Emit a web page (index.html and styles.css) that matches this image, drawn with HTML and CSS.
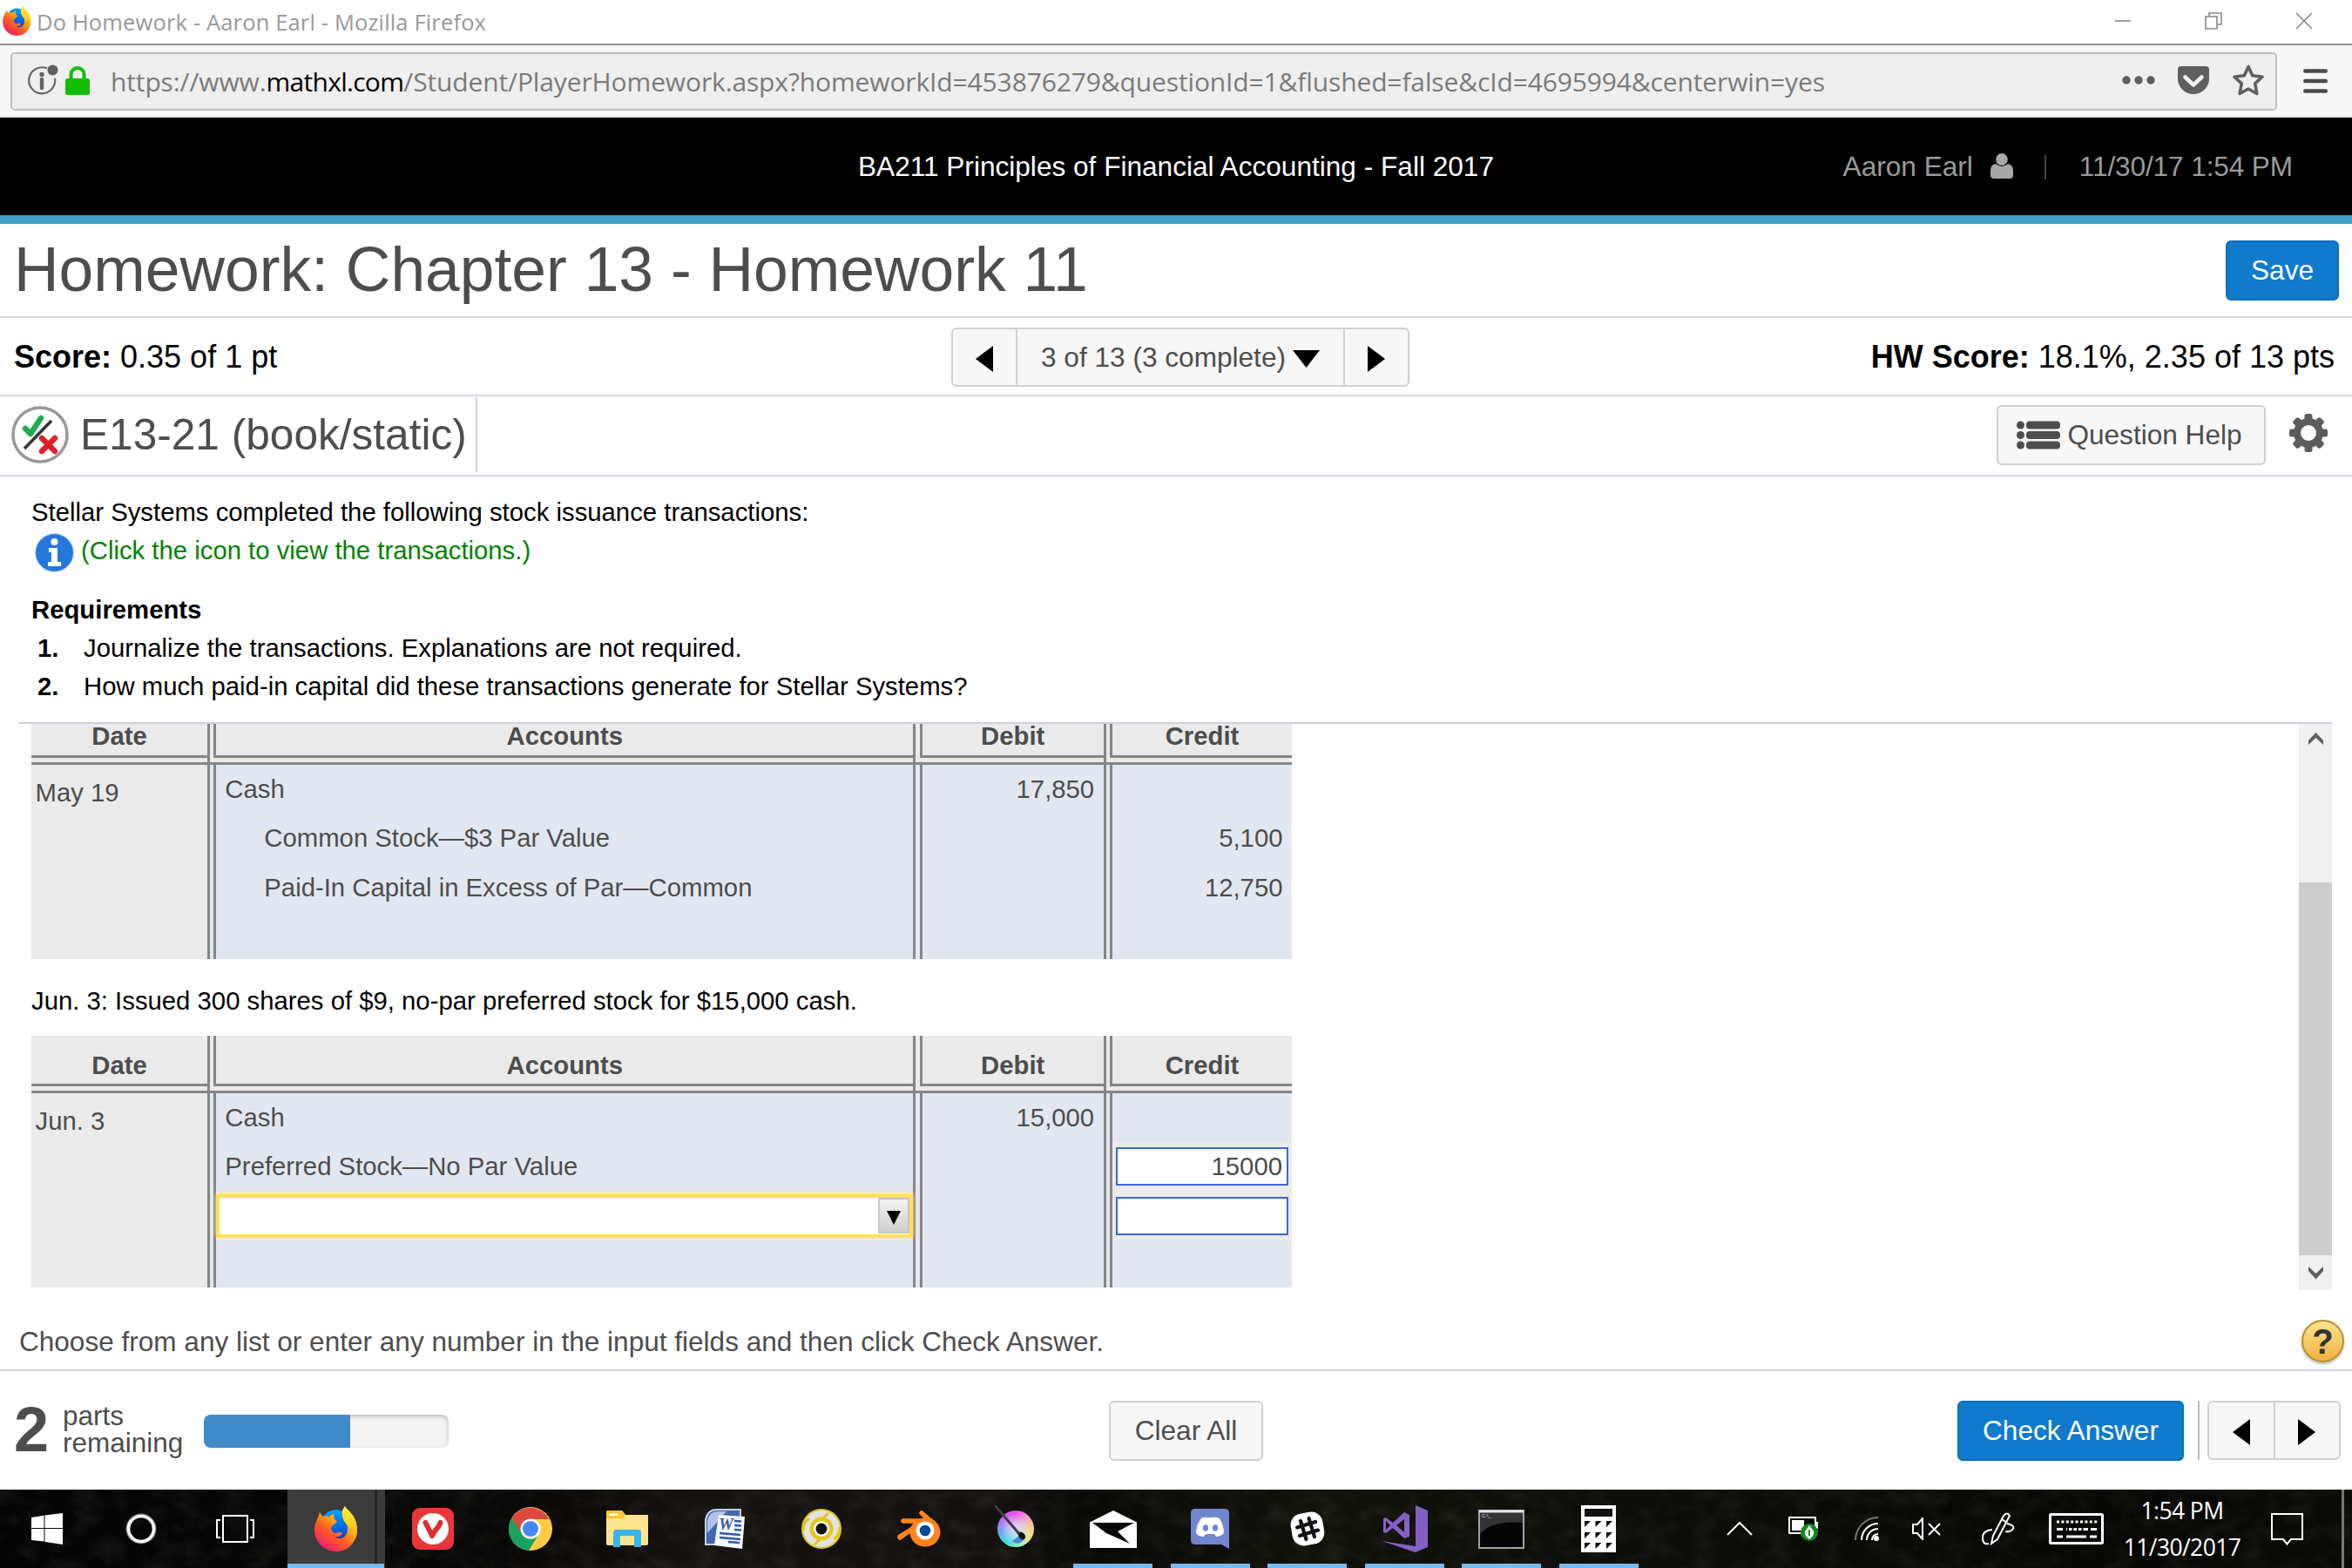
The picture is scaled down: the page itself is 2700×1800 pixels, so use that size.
FILE: index.html
```html
<!DOCTYPE html>
<html lang="en">
<head>
<meta charset="utf-8">
<title>Do Homework - Aaron Earl</title>
<link rel="stylesheet" href="styles.css">
</head>
<body>
<svg width="0" height="0" class="defs">
  <defs>
    <linearGradient id="ffBody" x1="0.9" y1="0" x2="0.2" y2="1"><stop offset="0" stop-color="#fff44f"/><stop offset=".35" stop-color="#ffb81a"/><stop offset=".65" stop-color="#ff5a24"/><stop offset="1" stop-color="#f0147a"/></linearGradient>
    <linearGradient id="ffTail" x1="0" y1="0" x2="0" y2="1"><stop offset="0" stop-color="#fff23c"/><stop offset=".5" stop-color="#ffd21e"/><stop offset="1" stop-color="#ff9a10"/></linearGradient>
    <linearGradient id="ffGlobe" x1="0" y1="0" x2="0" y2="1"><stop offset="0" stop-color="#00a2ff"/><stop offset=".6" stop-color="#0560e0"/><stop offset="1" stop-color="#3a1a80"/></linearGradient>
    <symbol id="firefox" viewBox="0 0 50 52">
      <ellipse cx="25" cy="24" rx="19" ry="20" fill="url(#ffGlobe)"/>
      <path d="M6 6c1 3 2 4 4 6 3-1 5-1 7 0 2-2 4-3 6-3-1 2-1 4 0 6l3 3-6 5c-2 3 0 7 4 8 3 0 5-2 8 0-2 4-5 5-9 4 6 5 14 1 15-7 1-8-5-12-6-19C31 5 34 2 35 0c1 4 13 9 14 26 0 15-10 26-24 26S0 41 0 27C0 18 5 14 6 6z" fill="url(#ffBody)"/>
      <path d="M35 0c2 5 14 10 14 27 0 5-1 8-3 12-1-9-4-13-9-18C31 15 30 6 35 0z" fill="url(#ffTail)"/>
    </symbol>
    <symbol id="left" viewBox="0 0 20 30"><path d="M20 0v30L0 15z"/></symbol>
    <symbol id="right" viewBox="0 0 20 30"><path d="M0 0v30l20-15z"/></symbol>
  </defs>
</svg>

<header class="titlebar">
  <svg class="app-icon" width="33" height="34"><use href="#firefox"/></svg>
  <span class="window-title">Do Homework - Aaron Earl - Mozilla Firefox</span>
  <div class="window-controls">
    <svg width="20" height="20" viewBox="0 0 20 20"><path d="M1 10h18" stroke="#888" stroke-width="1.6"/></svg>
    <svg width="20" height="20" viewBox="0 0 20 20" fill="none" stroke="#888" stroke-width="1.6"><path d="M1 5h13v14H1zM5 5V1h14v13h-5"/></svg>
    <svg width="20" height="20" viewBox="0 0 20 20" stroke="#888" stroke-width="1.6"><path d="M1 1l18 18M19 1L1 19"/></svg>
  </div>
</header>

<nav class="toolbar">
  <div class="urlbar">
    <svg class="i-id" width="36" height="36" viewBox="0 0 36 36"><path d="M22 4.500A15 15 0 1 0 31 16" fill="none" stroke="#666" stroke-width="2.200"/><circle cx="28.500" cy="6.500" r="6" fill="#5f5f5f"/><circle cx="16" cy="11.500" r="2.700" fill="#666"/><path d="M16 17v10" stroke="#666" stroke-width="4.400" stroke-linecap="round"/></svg>
    <svg class="i-lock" width="28" height="33" viewBox="0 0 28 33"><path d="M6.500 16V9.500a7.500 7.500 0 0 1 15 0V16" fill="none" stroke="#12bc00" stroke-width="4"/><rect y="14" width="28" height="19" rx="2.500" fill="#12bc00"/></svg>
    <span class="url">https://www.<b>mathxl.com</b>/Student/PlayerHomework.aspx?homeworkId=453876279&amp;questionId=1&amp;flushed=false&amp;cId=4695994&amp;centerwin=yes</span>
    <div class="page-actions">
      <svg width="38" height="10" viewBox="0 0 38 10" fill="#5f5f5f"><circle cx="5" cy="5" r="4.700"/><circle cx="19" cy="5" r="4.700"/><circle cx="33" cy="5" r="4.700"/></svg>
      <svg width="36" height="33" viewBox="0 0 36 33"><path d="M4 0h28q4 0 4 4v10a18 18 0 0 1-36 0V4q0-4 4-4z" fill="#5f5f5f"/><path d="M8.500 12.500l9.500 9 9.500-9" fill="none" stroke="#f0f0f0" stroke-width="4.500" stroke-linecap="round" stroke-linejoin="round"/></svg>
      <svg width="38" height="38" viewBox="0 0 38 38"><path d="M19 3.500l4.700 10.300 11.300 1.400-8.300 7.700 2.200 11.600L19 29l-9.900 5.500 2.200-11.600L3 15.200l11.300-1.400z" fill="none" stroke="#5f5f5f" stroke-width="3.600" stroke-linejoin="round"/></svg>
    </div>
  </div>
  <svg class="menu" width="28" height="28" viewBox="0 0 28 28" stroke="#4a4a4a" stroke-width="4.400" stroke-linecap="round"><path d="M2.200 2.500h23.600M2.200 14h23.600M2.200 25.500h23.600"/></svg>
</nav>

<div class="course-bar">
  <span class="course">BA211 Principles of Financial Accounting - Fall 2017</span>
  <div class="user">
    <span class="user-name">Aaron Earl</span>
    <svg width="26" height="29" viewBox="0 0 26 29" fill="#a8a8a8"><path d="M6 12Q0 13 0 20v5q0 4 4 4h18q4 0 4-4v-5q0-7-6-8-7 6-14 0z"/><ellipse cx="13" cy="7" rx="6.800" ry="7"/></svg>
    <i class="bar"></i>
    <span class="stamp">11/30/17 1:54 PM</span>
  </div>
</div>

<div class="row heading">
  <h1>Homework: Chapter 13 - Homework 11</h1>
  <button class="btn primary save">Save</button>
</div>

<div class="row score">
  <span><b>Score:</b> 0.35 of 1 pt</span>
  <div class="pager">
    <span class="cell prev"><svg width="20" height="30"><use href="#left"/></svg></span>
    <span class="cell count">3 of 13 (3 complete)<svg width="31" height="20" viewBox="0 0 31 20"><path d="M0 0h31L15.500 20z"/></svg></span>
    <span class="cell next"><svg width="20" height="30"><use href="#right"/></svg></span>
  </div>
  <span><b>HW Score:</b> 18.1%, 2.35 of 13 pts</span>
</div>

<div class="row exercise">
  <div class="exercise-name">
    <svg width="66" height="66" viewBox="0 0 66 66" fill="none"><circle cx="33" cy="33" r="31" stroke="#999" stroke-width="3.500"/><path d="M46 17L15 49" stroke="#333" stroke-width="3.500"/><path d="M16 26l6 6L34 14" stroke="#1fad50" stroke-width="6.500" stroke-linecap="round" stroke-linejoin="round"/><path d="M35 37l15 15M50 37L35 52" stroke="#db2128" stroke-width="6.500" stroke-linecap="round"/></svg>
    <span>E13-21 (book/static)</span>
  </div>
  <div class="exercise-tools">
    <button class="btn help"><svg width="50" height="33" viewBox="0 0 50 33" fill="#4d4d4d"><circle cx="4.500" cy="5" r="4.500"/><circle cx="4.500" cy="16.500" r="4.500"/><circle cx="4.500" cy="28" r="4.500"/><rect x="11" y="0.500" width="39" height="9" rx="4"/><rect x="11" y="12" width="39" height="9" rx="4"/><rect x="11" y="23.500" width="39" height="9" rx="4"/></svg>Question Help</button>
    <svg class="gear" width="44" height="44" viewBox="-22 -22 44 44"><g fill="#5c5c5c"><rect x="-4.500" y="-22" width="9" height="44" rx="2.500"/><rect x="-4.500" y="-22" width="9" height="44" rx="2.500" transform="rotate(45)"/><rect x="-4.500" y="-22" width="9" height="44" rx="2.500" transform="rotate(90)"/><rect x="-4.500" y="-22" width="9" height="44" rx="2.500" transform="rotate(135)"/><circle r="17"/></g><circle r="9" fill="#fff"/></svg>
  </div>
</div>

<section class="prompt">
  <p>Stellar Systems completed the following stock issuance transactions:</p>
  <p class="link"><svg width="45" height="45" viewBox="0 0 45 45"><circle cx="22.500" cy="22.500" r="21.500" fill="#2478db" stroke="#5b9be6"/><circle cx="22.500" cy="10" r="4" fill="#fff"/><path d="M16 17h10v16h4v5H15v-5h4V22h-3z" fill="#fff"/></svg>(Click the icon to view the transactions.)</p>
  <p class="req"><b>Requirements</b></p>
  <p class="item"><b>1.</b>Journalize the transactions. Explanations are not required.</p>
  <p class="item"><b>2.</b>How much paid-in capital did these transactions generate for Stellar Systems?</p>
</section>

<main class="scroller">
  <div class="entries">
    <div class="ledger clipped">
      <div class="cols head"><b>Date</b><b>Accounts</b><b>Debit</b><b>Credit</b></div>
      <div class="cols strip"><i></i><i></i><i></i><i></i></div>
      <div class="cols body">
        <div class="date">May 19</div>
        <div class="acct"><p>Cash</p><p class="indent">Common Stock—$3 Par Value</p><p class="indent">Paid-In Capital in Excess of Par—Common</p></div>
        <div class="num"><p>17,850</p></div>
        <div class="num"><p>&nbsp;</p><p>5,100</p><p>12,750</p></div>
      </div>
    </div>
    <p class="event">Jun. 3: Issued 300 shares of $9, no-par preferred stock for $15,000 cash.</p>
    <div class="ledger">
      <div class="cols head"><b>Date</b><b>Accounts</b><b>Debit</b><b>Credit</b></div>
      <div class="cols strip"><i></i><i></i><i></i><i></i></div>
      <div class="cols body">
        <div class="date">Jun. 3</div>
        <div class="acct"><p>Cash</p><p>Preferred Stock—No Par Value</p><div class="pick-row"><div class="pick"><span class="pick-btn"><svg width="16" height="16" viewBox="0 0 16 16"><path d="M0 0h16L8 16z"/></svg></span></div></div></div>
        <div class="num"><p>15,000</p></div>
        <div class="num"><p>&nbsp;</p><div class="field"><span>15000</span></div><div class="field"><span></span></div></div>
      </div>
    </div>
  </div>
  <div class="scrollbar">
    <svg width="17" height="15" viewBox="0 0 17 15"><path d="M0 10l8.500-9 8.500 9v5L8.500 7 0 15z" fill="#5f5f5f"/></svg>
    <i class="thumb"></i>
    <svg width="17" height="15" viewBox="0 0 17 15"><path d="M0 0l8.500 8L17 0v5l-8.500 9.500L0 5z" fill="#5f5f5f"/></svg>
  </div>
</main>

<div class="instruction">
  <p>Choose from any list or enter any number in the input fields and then click Check Answer.</p>
  <span class="hint">?</span>
</div>

<footer class="actions">
  <div class="parts"><b>2</b><span>parts<br>remaining</span><div class="progress"><i></i></div></div>
  <button class="btn clear">Clear All</button>
  <div class="submit">
    <button class="btn primary check">Check Answer</button>
    <i class="rule"></i>
    <div class="pager small"><span class="cell"><svg width="20" height="30"><use href="#left"/></svg></span><span class="cell"><svg width="20" height="30"><use href="#right"/></svg></span></div>
  </div>
</footer>

<div class="taskbar">
  <svg class="texture" width="2700" height="90"><filter id="rock"><feTurbulence type="fractalNoise" baseFrequency="0.035 0.05" numOctaves="5" seed="4"/><feColorMatrix values="0 0 0 0 .36  0 0 0 0 .33  0 0 0 0 .26  1.6 0 0 0 -.62"/></filter><rect width="2700" height="90" filter="url(#rock)"/></svg>
  <div class="apps">
    <span class="sys"><svg width="36" height="36" viewBox="0 0 36 36" fill="#fff"><path d="M0 5l14.500-2.200V17H0zM15.500 2.600L36 0v17H15.500zM0 18h14.500v14.500L0 31zM15.500 18H36v18l-20.500-3z"/></svg></span>
    <span class="sys"><svg width="36" height="36" viewBox="0 0 36 36" fill="none"><circle cx="18" cy="18" r="16" stroke="#777" stroke-width="3"/><circle cx="18" cy="18" r="14.500" stroke="#fff" stroke-width="3.600"/></svg></span>
    <span class="sys"><svg width="44" height="34" viewBox="0 0 44 34" fill="none" stroke="#fff" stroke-width="2"><path d="M8 2h28v30H8zM5 7H1v20h4M39 7h4v20h-4"/></svg></span>
    <span class="app active"><svg width="50" height="52"><use href="#firefox"/></svg></span>
    <span class="app"><svg width="48" height="48" viewBox="0 0 48 48"><rect width="48" height="48" rx="9" fill="#ea3639"/><circle cx="24" cy="24" r="18" fill="#fff"/><path d="M15.500 17L23 32l4-6.500q4.500-5 5.500-8.500" fill="none" stroke="#dc2f33" stroke-width="6" stroke-linecap="round" stroke-linejoin="round"/></svg></span>
    <span class="app"><svg width="50" height="50" viewBox="0 0 50 50"><circle cx="25" cy="25" r="25" fill="#ffcd43"/><path d="M3.400 12.500A25 25 0 0 0 23 50l11-18-18-2z" fill="#1aa260"/><path d="M3.400 12.500A25 25 0 0 1 46.600 14H25l-11 15z" fill="#db4a3d"/><circle cx="25" cy="25" r="11.500" fill="#fff"/><circle cx="25" cy="25" r="9" fill="#4587f4"/></svg></span>
    <span class="app"><svg width="48" height="42" viewBox="0 0 48 42"><path d="M0 3q0-3 2-3h16l4 5h26v33q0 2-2 2H2q-2 0-2-2z" fill="#ffe48f"/><path d="M0 2q0-2 2-2h16l4 5-3 4H0z" fill="#fcc72e"/><path d="M3 3.500h10v2.500H3z" fill="#fff"/><path d="M8 42V26q0-4 4-4h24q4 0 4 4v16h-8V29H16v13z" fill="#38b5ea"/></svg></span>
    <span class="app"><svg width="46" height="46" viewBox="0 0 46 46"><path d="M1 41V13Q3 1 14 1h27v40z" fill="#4169ad" stroke="#c3d1e8" stroke-width="2"/><path d="M3 14Q5 3 15 3h10L3 28z" fill="#b1c4e5"/><path d="M16 7l30 2-3 37-32-4z" fill="#f6f9ff"/><path d="M34 14l8 .500M34 19l8 .500M34 24l8 .500M17 28l24 2M17 33l24 2M27 38l13 1" stroke="#315ba8" stroke-width="2.500"/><text x="16" y="24" class="word-letter">W</text></svg></span>
    <span class="app"><svg width="46" height="46" viewBox="0 0 46 46"><circle cx="23" cy="23" r="22" fill="#e3e3e1" stroke="#dfc623" stroke-width="2"/><path d="M31 5L10 25M36 21L15 41M2 25q0-9 7-14M44 21q0 9-7 14" stroke="#e4c51b" stroke-width="3" fill="none"/><circle cx="23" cy="23" r="11" fill="none" stroke="#e8c41c" stroke-width="5"/><circle cx="23" cy="23" r="9" fill="#fff"/><circle cx="23" cy="23" r="6.500" fill="#111"/></svg></span>
    <span class="app"><svg width="50" height="42" viewBox="0 0 50 42"><path d="M28 3L43 16M7 12h25L3 30M23 17L3 31" stroke="#ff831c" stroke-width="5.500" stroke-linecap="round" fill="none"/><ellipse cx="32" cy="25" rx="17.500" ry="16.500" fill="#ff831c"/><circle cx="32" cy="23" r="10.500" fill="#fff"/><circle cx="32" cy="23" r="6.300" fill="#08479a"/></svg></span>
    <span class="app"><span class="krita"><svg width="46" height="50" viewBox="0 0 46 50"><path d="M20 41q6 6 13-1 3-5-1-8" fill="#4c86d8"/><path d="M0 0l29 34" stroke="#453b4a" stroke-width="3"/><ellipse cx="31" cy="35" rx="3.500" ry="5" transform="rotate(-40 31 35)" fill="#16171c"/></svg></span></span>
    <span class="app open"><svg width="54" height="43" viewBox="0 0 54 43"><path d="M0 13.500L27 0l27 13.500V43H0z" fill="#fff"/><path d="M3 14h48L32 24l14 14-27-12z" fill="#070707"/></svg></span>
    <span class="app open"><svg width="44" height="46" viewBox="0 0 44 46"><path d="M5 0h34q5 0 5 5v41l-9-5H5q-5 0-5-5V5q0-5 5-5z" fill="#7285cf"/><path d="M12 11q4-2 7-1h6q4-1 8 1 5 8 5 17-4 4-9 4l-2-3H17l-2 3q-6 0-9-4 0-9 6-17z" fill="#fff"/><ellipse cx="17" cy="22" rx="3.200" ry="3.800" fill="#7285cf"/><ellipse cx="28" cy="22" rx="3.200" ry="3.800" fill="#7285cf"/></svg></span>
    <span class="app open"><svg width="42" height="42" viewBox="0 0 42 42"><rect x="2.500" y="2.500" width="37" height="37" rx="13" fill="#fff" transform="rotate(-10 21 21)"/><g transform="rotate(-17 21 21)" stroke="#111" stroke-width="4.200" stroke-linecap="round"><path d="M16 10v22M26 10v22M10 16h22M10 26h22"/></g></svg></span>
    <span class="app open"><svg width="53" height="54" viewBox="0 0 53 54"><path fill-rule="evenodd" d="M39 0l14 6v42l-14 6L0 41l39 6zM2 15l3-1 8 6L26 8l6 3v25l-6 2-13-12-8 6-3-1zM5 18v10l5-5zM26 16l-9 7 9 8z" fill="#865fc5"/></svg></span>
    <span class="app open"><svg width="53" height="45" viewBox="0 0 53 45"><rect x="1" y="1" width="51" height="43" fill="#050505" stroke="#9ea3a8" stroke-width="2"/><path d="M2 3h49v12Q16 12 2 28z" fill="#333"/><path d="M1 2h51" stroke="#e4e6e9" stroke-width="3"/><text x="4" y="9" class="cmd-letter">C:\_</text></svg></span>
    <span class="app open"><svg width="40" height="54" viewBox="0 0 40 54"><rect width="40" height="54" fill="#fff"/><rect x="4" y="4" width="32" height="9" fill="#111"/><path d="M4 18h7l-7 7zM16.500 18h7l-7 7zM29 18h7l-7 7zM4 31h7l-7 7zM16.500 31h7l-7 7zM29 31h7l-7 7zM4 43h7l-7 7zM16.500 43h7l-7 7zM29 43h7l-7 7z" fill="#111"/></svg></span>
  </div>
  <div class="tray">
    <span><svg width="30" height="16" viewBox="0 0 30 16"><path d="M1 15L15 1l14 14" fill="none" stroke="#fff" stroke-width="2"/></svg></span>
    <span><svg width="34" height="28" viewBox="0 0 34 28"><path d="M1 1h30v18H1z" fill="none" stroke="#fff" stroke-width="2"/><path d="M4 4h14v12H4zM32 6h2v8h-2z" fill="#fff"/><circle cx="24" cy="18" r="10" fill="#12891f"/><path d="M24 10l5 7q1 5-5 9-6-4-5-9z" fill="#fff"/><path d="M24 15v7" stroke="#12891f" stroke-width="2"/></svg></span>
    <span><svg width="28" height="28" viewBox="0 0 28 28" fill="none" stroke-width="2"><path d="M1 27A26 26 0 0 1 27 1" stroke="#777"/><path d="M8 27A19 19 0 0 1 27 8M14 27a13 13 0 0 1 13-13M20 27a7 7 0 0 1 7-7" stroke="#fff"/><circle cx="25" cy="25" r="3" fill="#fff"/></svg></span>
    <span><svg width="33" height="26" viewBox="0 0 33 26" fill="none" stroke="#fff" stroke-width="2"><path d="M1 8h5l6-7v24l-6-7H1zM19 7l13 13M32 7L19 20"/></svg></span>
    <span><svg width="38" height="38" viewBox="0 0 38 38" fill="none" stroke="#fff" stroke-width="2"><path d="M25 4q4-5 7 0L18 31l-7 5 2-9zM23 8l6 4M12 20q-11 1-11 9 0 9 7 7M29 13q9 2 7 6-3 4-9 3"/></svg></span>
    <span><svg width="63" height="36" viewBox="0 0 63 36" fill="none" stroke="#fff"><rect x="1.500" y="1.500" width="60" height="33" rx="1" stroke-width="3"/><path d="M9 10h47" stroke-width="3" stroke-dasharray="3 2.400"/><path d="M9 18.500h7M20 18.500h25M48 18.500h7" stroke-width="3"/><path d="M9 27h7M20 27h23M47 27h8" stroke-width="3"/><path d="M22 17v3M27.500 17v3M33 17v3M38.500 17v3" stroke="#111" stroke-width="2"/></svg></span>
    <span class="clock">1:54 PM<br>11/30/2017</span>
    <span><svg width="37" height="37" viewBox="0 0 37 37" fill="none" stroke="#fff" stroke-width="2"><path d="M1 1h35v29H23l-4.500 5.500L14 30H1z"/></svg></span>
    <i class="desktop"></i>
  </div>
</div>
</body>
</html>
```
FILE: styles.css
```css
* { box-sizing: border-box; }
body { margin: 0; width: 2700px; height: 1800px; overflow: hidden; background: #fff; color: #000; font-family: "Liberation Sans", Arial, sans-serif; font-size: 29.3px; }
p, h1 { margin: 0; }
svg { display: block; flex: none; }
.defs { position: absolute; }
button { font-family: inherit; }

.titlebar { height: 52px; display: flex; align-items: center; padding: 0 38px 2px 3px; border-bottom: 2px solid #909090; }
.window-title { margin-left: 6px; padding-top: 2px; font: 25.5px "Open Sans", sans-serif; letter-spacing: .15px; color: #999; white-space: nowrap; }
.window-controls { margin-left: auto; display: flex; gap: 84px; padding-right: 7px; }

.toolbar { height: 83px; display: flex; padding: 8px 0; background: #f8f8f8; border-bottom: 2px solid #e2e2e2; padding-left: 12px; }
.urlbar { width: 2602px; height: 67px; display: flex; align-items: center; border: 2px solid #bfbfbf; border-radius: 5px; background: #efefef; padding-left: 18px; }
.i-id { margin-top: -3px; }
.i-lock { margin: -3px 0 0 7px; }
.url { margin-left: 24px; font: 30px "Open Sans", sans-serif; color: #7b7b7b; letter-spacing: -.13px; white-space: nowrap; }
.url b { font-weight: 400; color: #000; letter-spacing: -.7px; }
.page-actions { margin-left: auto; display: flex; align-items: center; gap: 26px; padding-right: 12px; margin-top: -3px; }
.menu { margin: 19px 0 0 30px; }

.course-bar { height: 122px; display: grid; grid-template-columns: 1fr auto 1fr; align-items: center; background: #000; border-bottom: 10px solid #409fc2; font-size: 31.6px; padding-top: 1px; white-space: nowrap; }
.course { grid-column: 2; color: #fff; }
.user { display: flex; align-items: center; justify-content: flex-end; color: #9b9b9b; padding-right: 68px; }
.stamp { letter-spacing: -.12px; }
.user svg { margin-left: 20px; margin-top: -3px; }
.bar { width: 2px; height: 28px; margin: 0 38px 0 36px; background: #4a4a4a; }

.row { display: flex; align-items: center; justify-content: space-between; white-space: nowrap; border-bottom: 2px solid #d3d8df; }
.heading { height: 108px; padding: 0 15px 0 16px; }
h1 { font-size: 71.4px; font-weight: 400; color: #4d4d4d; padding-bottom: 3px; }
.btn { display: flex; align-items: center; justify-content: center; height: 69px; padding: 0; border: 2px solid #d0d0d0; border-radius: 6px; background: #f7f7f7; color: #4d4d4d; font-size: 31.6px; white-space: nowrap; }
.primary { background: #107acc; border-color: #0d6ebb; color: #fff; }
.save { width: 130px; }

.score { height: 90px; padding: 2px 20px 0 16px; font-size: 36px; display: grid; grid-template-columns: 1076px 526px 1fr; }
.score > :last-child { text-align: right; }
.pager { display: flex; height: 68px; border: 2px solid #d0d0d0; border-radius: 6px; background: #f7f7f7; color: #4d4d4d; font-size: 31.6px; }
.pager svg { fill: #000; margin-top: 4px; }
.cell { display: flex; align-items: center; justify-content: center; border-left: 2px solid #d0d0d0; }
.cell:first-child { border-left: 0; }
.prev { width: 72px; }
.count { width: 376px; gap: 8px; }
.next { flex: 1; }

.exercise { height: 92px; padding: 0 28px 2px 13px; color: #4d4d4d; }
.exercise-name { display: flex; align-items: center; height: 86px; width: 535px; gap: 13px; border-right: 2px solid #cfd3e0; font-size: 49.6px; }
.exercise-tools { display: flex; align-items: center; gap: 27px; }
.help { width: 309px; gap: 8px; padding-right: 4px; }
.gear { margin-top: -4px; }

.prompt { height: 282px; padding: 19px 0 0 36px; line-height: 44px; white-space: nowrap; }
.link { display: flex; height: 44px; color: #008200; }
.link svg { margin: 2px 8px 0 4px; }
.req { padding-top: 24px; }
.item b { display: inline-block; width: 60px; padding-left: 7px; }

.scroller { height: 652px; margin: 0 23px 0 22px; border-top: 2px solid #cdd2dd; display: flex; justify-content: space-between; }
.entries { padding-left: 14px; }
.ledger { width: 1447px; background: #ebebeb; color: #4d4d4d; }
.cols { display: grid; grid-template-columns: 205px 806px 214px 209px; column-gap: 4.330px; }
.cols > * { border-right: 3px solid #868686; border-left: 3px solid #868686; }
.cols > :first-child { border-left: 0; }
.cols > :last-child { border-right: 0; }
.head b { height: 58px; line-height: 68px; text-align: center; border-bottom: 3px solid #868686; }
.clipped .head b { height: 39px; line-height: 27px; }
.strip > * { height: 5px; border-left: 0; }
.body { height: 226px; border-top: 3px solid #868686; background: #e2e8f2; }
.body p { height: 56.300px; line-height: 56.300px; white-space: nowrap; }
.date { background: #ebebeb; padding: 15px 0 0 4.500px; }
.acct p { padding-left: 10px; }
.acct .indent { padding-left: 55px; }
.num { text-align: right; }
.num p { padding-right: 10.500px; }
.event { height: 88px; line-height: 96px; }
.pick-row { height: 56.300px; background: #ebebeb; padding-top: 3px; }
.pick { display: flex; justify-content: flex-end; height: 50px; border: 4px solid #ffe05c; box-shadow: 0 -1px 5px #ffe58a; background: #fff; }
.pick-btn { width: 36px; height: 41px; display: flex; align-items: center; justify-content: center; padding-top: 6px; border: 2px solid #c6c6c6; background: linear-gradient(#f3f3f3, #cfcfcf); }
.field { height: 56.300px; background: #ebebeb; padding: 6px 4px 0 4px; }
.field span { display: block; height: 44px; border: 2px solid #3568d4; background: #fff; padding-right: 5px; line-height: 40px; }
.scrollbar { width: 38px; height: 650px; background: #f0f0f0; display: flex; flex-direction: column; align-items: center; padding-top: 9px; }
.thumb { width: 38px; height: 428px; margin: 158px 0 13px; background: #cdcdcd; }

.instruction { height: 93px; display: flex; justify-content: space-between; padding: 28px 9px 0 22px; border-bottom: 2px solid #d0d4e0; color: #4d4d4d; font-size: 31.55px; line-height: 62px; }
.hint { width: 49px; height: 49px; margin-top: 6px; border: 2px solid #b78f34; border-radius: 50%; background: linear-gradient(#fde48d, #f2b240); box-shadow: 0 2px 3px #bbb; color: #333; font-size: 40px; font-weight: 700; line-height: 46px; text-align: center; }

.actions { height: 136px; display: grid; grid-template-columns: 1257px 177px 1fr; align-items: center; padding: 0 13px 0 16px; color: #4d4d4d; }
.parts { display: flex; align-items: center; font-size: 31.5px; line-height: 31px; margin-top: -3px; }
.parts b { width: 56px; font-size: 72px; line-height: 80px; }
.parts span { width: 162px; }
.progress { width: 281px; height: 38px; margin-top: 5px; border-radius: 8px; overflow: hidden; background: #f4f4f4; box-shadow: inset 0 2px 5px #bbb; }
.progress i { display: block; width: 168px; height: 38px; background: #428bca; }
.submit { display: flex; align-items: center; justify-content: flex-end; }
.check { width: 260px; }
.rule { width: 2px; height: 68px; margin: 0 9px 0 16px; background: #bbb; }
.small { width: 153px; }
.small .cell { flex: 1; }

.taskbar { height: 90px; position: relative; display: flex; background: linear-gradient(90deg, #040404 0, #080706 600px, #15120f 800px, #12100e 1150px, #080806 1250px, #11110b 1500px, #0c0c08 1900px, #060604 2400px, #0a0a05); }
.texture { position: absolute; inset: 0; opacity: .12; }
.apps, .tray { position: relative; display: flex; }
.apps { width: 1960px; }
.sys, .app { display: flex; align-items: center; justify-content: center; flex: none; width: 108px; height: 90px; }
.sys:nth-child(3) { margin-right: 6px; }
.app { width: 111.500px; position: relative; }
.active { background: linear-gradient(90deg, transparent 100px, #252525 100px, #252525 103px, transparent 103px), #3b3b3b; }
.open::after, .active::after { content: ""; position: absolute; bottom: 0; left: 10px; width: 91px; height: 5px; background: #76b9ed; }
.active::after { left: 0; width: 111px; }
.krita { width: 42px; height: 42px; border-radius: 50%; background: radial-gradient(circle, #d9d8ef 10%, transparent 60%), conic-gradient(#ec4df0, #f9a9b9, #f7e08b, #b9efac, #43e7e2, #68a7f4, #c267ee, #ec4df0); }
.krita svg { margin: -6px 0 0 -3px; }
.word-letter { font: italic bold 19px "Liberation Serif", serif; fill: #315ba8; }
.cmd-letter { font: 6px "Liberation Sans", sans-serif; fill: #ddd; }
.tray span { display: flex; align-items: center; justify-content: center; width: 74px; }
.tray span:nth-child(2) { width: 72px; }
.tray span:nth-child(4) { width: 62px; }
.tray span:nth-child(5) { width: 104px; }
.tray span:nth-child(6) { width: 75px; }
.tray span.clock { width: 168px; display: block; padding-top: 3px; text-align: center; color: #fff; font: 26.5px/42px "Open Sans", sans-serif; letter-spacing: -.6px; }
.tray span:nth-child(8) { width: 72px; }
.desktop { width: 3px; margin-left: 27px; background: #777; }
```
